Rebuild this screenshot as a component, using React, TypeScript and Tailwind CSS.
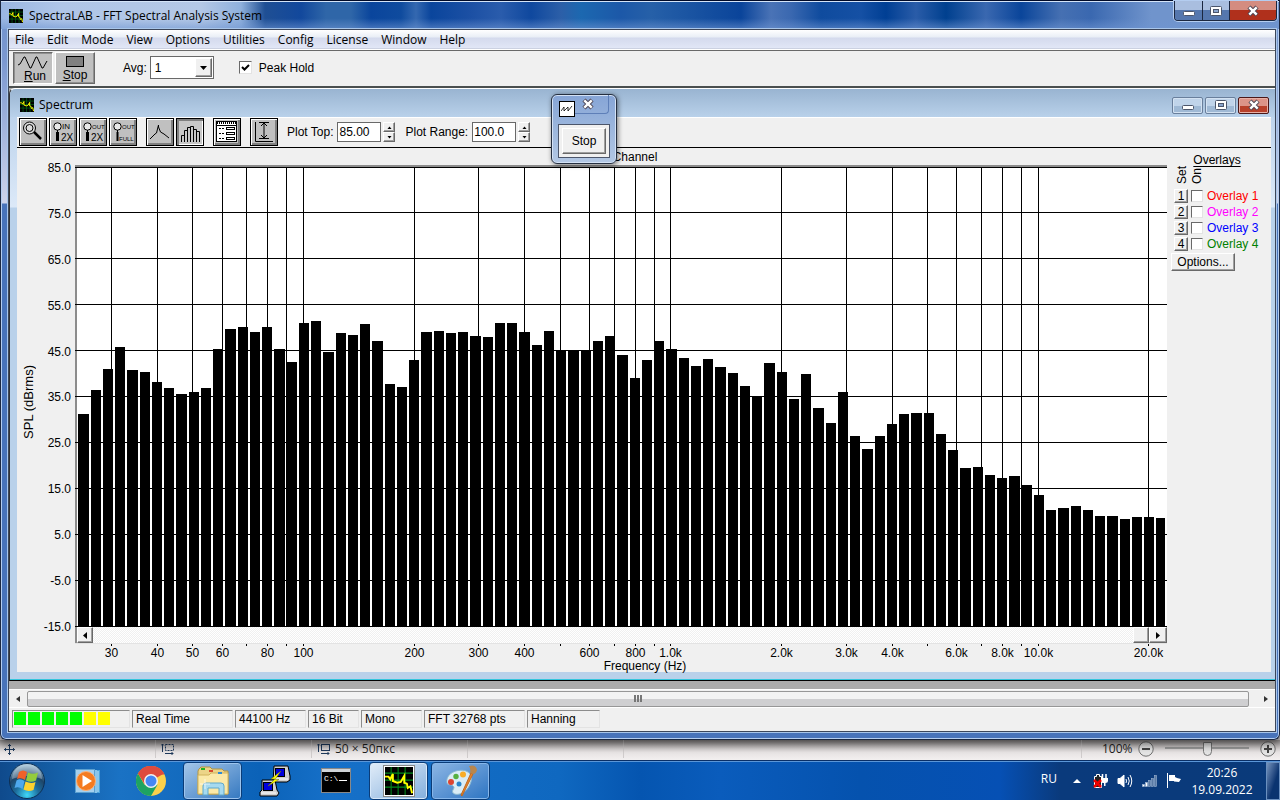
import React from 'react';

const barTops = [
  414, 390, 369, 347, 370, 372, 382, 388, 394, 392, 388, 349, 329, 327, 332, 327, 349, 362, 323, 321,
  352, 333, 335, 324, 341, 384, 387, 360, 332, 331, 333, 332, 336, 337, 323, 323, 332, 345, 331, 350,
  350, 350, 341, 336, 355, 378, 360, 341, 349, 358, 366, 359, 367, 373, 386, 396, 363, 372, 399, 374,
  408, 423, 392, 436, 449, 436, 424, 414, 413, 413, 434, 450, 468, 467, 475, 478, 476, 485, 495, 510,
  508, 506, 510, 516, 516, 519, 517, 517, 518,
].map((y) => y - 167);

const PLOT_W = 1092;
const PLOT_H = 460;

const levels = ['85.0', '75.0', '65.0', '55.0', '45.0', '35.0', '25.0', '15.0', '5.0', '-5.0', '-15.0'];

const freqs: { x: number; label?: string }[] = [
  { x: 36, label: '30' },
  { x: 82, label: '40' },
  { x: 117, label: '50' },
  { x: 147, label: '60' },
  { x: 171 },
  { x: 192, label: '80' },
  { x: 211 },
  { x: 228, label: '100' },
  { x: 339, label: '200' },
  { x: 403, label: '300' },
  { x: 449, label: '400' },
  { x: 485 },
  { x: 514, label: '600' },
  { x: 539 },
  { x: 560, label: '800' },
  { x: 579 },
  { x: 595, label: '1.0k' },
  { x: 706, label: '2.0k' },
  { x: 771, label: '3.0k' },
  { x: 817, label: '4.0k' },
  { x: 852 },
  { x: 881, label: '6.0k' },
  { x: 906 },
  { x: 927, label: '8.0k' },
  { x: 946 },
  { x: 963, label: '10.0k' },
  { x: 1073, label: '20.0k' },
];

const menus = ['File', 'Edit', 'Mode', 'View', 'Options', 'Utilities', 'Config', 'License', 'Window', 'Help'];

const overlays = [
  { id: 1, color: 'text-[#ff0000]' },
  { id: 2, color: 'text-[#ff00ff]' },
  { id: 3, color: 'text-[#0000ff]' },
  { id: 4, color: 'text-[#008000]' },
];

const cells = [
  { text: 'Real Time', width: 'w-[101px]' },
  { text: '44100 Hz', width: 'w-[71px]' },
  { text: '16 Bit', width: 'w-[51px]' },
  { text: 'Mono', width: 'w-[61px]' },
  { text: 'FFT 32768 pts', width: 'w-[101px]' },
  { text: 'Hanning', width: 'w-[73px]' },
];

const raised = 'bg-[#f0f0f0] border border-t-white border-l-white border-r-[#696969] border-b-[#696969] shadow-[inset_-1px_-1px_0_#a0a0a0]';

const AppIcon: React.FC<{ className?: string }> = ({ className }) => (
  <svg viewBox="0 0 16 16" className={className}>
    <rect width="16" height="16" fill="#000" />
    <path d="M3.500 0V16M7.500 0V16M11.500 0V16M0 3.500H16M0 7.500H16M0 11.500H16" stroke="#008a1c" strokeWidth="0.600" />
    <path d="M0 5.500H2L3 7L4.500 4V8L7 9L9 8.500L11 5V9L12.500 9.500L13 12L14.500 11L15.500 15" fill="none" stroke="#ffff00" strokeWidth="1.100" />
  </svg>
);

const WindowGlyph: React.FC<{ kind: 'min' | 'max' | 'close' }> = ({ kind }) => (
  <svg width="14" height="12" viewBox="0 0 14 12">
    {kind === 'min' && <rect x="1.500" y="6.500" width="11" height="4" rx="1" fill="#fff" stroke="#4c566b" />}
    {kind === 'max' && (
      <>
        <rect x="1.500" y="1.500" width="11" height="9" rx="1" fill="#fff" stroke="#4c566b" />
        <rect x="4.500" y="4.500" width="5" height="3" fill="#8aa5ce" stroke="#4c566b" />
      </>
    )}
    {kind === 'close' && (
      <>
        <path d="M3 2L11 10M11 2L3 10" stroke="#4c4452" strokeWidth="4.400" />
        <path d="M3.300 2.300L10.700 9.700M10.700 2.300L3.300 9.700" stroke="#fff" strokeWidth="2.400" />
      </>
    )}
  </svg>
);

const ToolButton: React.FC<{ label: string; pressed?: boolean; className?: string; children: React.ReactNode }> = ({
  label,
  pressed,
  className = '',
  children,
}) => (
  <button
    aria-label={label}
    className={`w-7 h-7 border border-black ${
      pressed
        ? 'bg-[#c8c8c8] shadow-[inset_2px_2px_0_#808080,inset_-1px_-1px_0_#fff]'
        : 'bg-[#c0c0c0] shadow-[inset_1px_1px_0_#fff,inset_-2px_-2px_0_#808080]'
    } ${className}`}
  >
    <svg width="26" height="26" viewBox="0 0 26 26" fill="none" stroke="#000">
      {children}
    </svg>
  </button>
);

const ZoomMark: React.FC<{ top: string; bottom: string; small?: boolean }> = ({ top, bottom, small }) => (
  <>
    <circle cx="7.500" cy="7.500" r="3.700" fill="#e8e8e8" />
    <path d="M7.500 11V13" />
    <path d="M7.500 13V22" strokeWidth={small ? 2 : 3} />
    <text x="12" y="10" fontSize={top === 'IN' ? 8 : 6} stroke="none" fill="#000">{top}</text>
    <text x={small ? 9 : 11} y="22" fontSize={small ? 6 : 10} stroke="none" fill="#000">{bottom}</text>
  </>
);

const NumberField: React.FC<{ id: string; label: string; value: string }> = ({ id, label, value }) => (
  <div className="flex items-center">
    <label htmlFor={id} className="mr-1 whitespace-nowrap">{label}</label>
    <input id={id} defaultValue={value} className="w-11 h-5 bg-white border border-[#696969] px-px mr-0.5 outline-none" />
    <div className="flex flex-col">
      {['up', 'down'].map((dir) => (
        <button key={dir} aria-label={`${label} ${dir}`} className={`w-3 h-[10px] flex items-center justify-center ${raised}`}>
          <svg width="5" height="3" viewBox="0 0 5 3">
            <path d={dir === 'up' ? 'M0.500 3H4.500L2.500 0.500Z' : 'M0.500 0H4.500L2.500 2.500Z'} />
          </svg>
        </button>
      ))}
    </div>
  </div>
);

const Spectrum: React.FC = () => {
  const barX = (i: number) => Math.round(3.4 + 12.25 * i);

  return (
    <svg viewBox={`0 0 ${PLOT_W} ${PLOT_H}`} preserveAspectRatio="none" className="block w-full flex-1 min-h-0 bg-white">
      <rect width="2" height={PLOT_H} fill="#8c8c8c" />
      {levels.map((level, i) => (
        <rect key={level} y={i === 0 ? 0 : i * 46 - 1} width={PLOT_W} height="1" />
      ))}
      {freqs.map((f) => (
        <rect key={f.x} x={f.x} width="1" height={PLOT_H} />
      ))}
      {barTops.map((top, i) => (
        <rect
          key={i}
          x={barX(i)}
          y={top}
          width={i === barTops.length - 1 ? 9 : barX(i + 1) - barX(i) - 2}
          height={PLOT_H - top}
        />
      ))}
    </svg>
  );
};

const PlotArea: React.FC = () => (
  <div className="flex flex-1 min-h-0">
    <div className="w-[58px] flex shrink-0">
      <div className="w-6 flex items-center justify-center pb-4">
        <span className="[writing-mode:vertical-rl] rotate-180 whitespace-nowrap text-[13px] leading-4">SPL (dBrms)</span>
      </div>
      <div className="flex-1 flex flex-col justify-between items-end pt-3 pb-[37px] pr-1 leading-4">
        {levels.map((level) => (
          <span key={level}>{level}</span>
        ))}
      </div>
    </div>

    <div className="flex-1 min-w-0 flex flex-col">
      <div className="h-[17px] leading-[18px] text-center pl-7">Channel</div>
      <div className="h-0.5 bg-[#8c8c8c]" />
      <Spectrum />
      <div className="h-4 flex border-l-2 border-[#8c8c8c] bg-[#f8f8f8]">
        <button aria-label="Scroll plot left" className={`w-4 flex items-center justify-center ${raised}`}>
          <svg width="4" height="7" viewBox="0 0 4 7"><path d="M4 0V7L0 3.500Z" /></svg>
        </button>
        <div className="flex-1 bg-[repeating-conic-gradient(#f0f0f0_0_25%,#ffffff_0_50%)] bg-[length:2px_2px]" />
        <div className={`w-4 ${raised}`} />
        <button aria-label="Scroll plot right" className={`w-[18px] flex items-center justify-center ${raised}`}>
          <svg width="4" height="7" viewBox="0 0 4 7"><path d="M0 0V7L4 3.500Z" /></svg>
        </button>
      </div>
      <div className="h-[29px] relative border-t border-[#e3e3e3]">
        {freqs.map((f) => (
          <div
            key={f.x}
            className="absolute top-0 w-px flex flex-col items-center"
            style={{ left: `${(f.x / PLOT_W) * 100}%` }}
          >
            <i className="w-px h-0.5 bg-black" />
            {f.label && <span className="mt-px leading-3">{f.label}</span>}
          </div>
        ))}
        <div className="absolute inset-x-0 bottom-0 pl-12 text-center leading-3">Frequency (Hz)</div>
      </div>
    </div>

    <div className="w-[104px] shrink-0 pl-1 pt-1">
      <div className="pr-2 text-center underline underline-offset-2 leading-4">Overlays</div>
      <div className="flex pl-1 gap-px h-4 mb-1 items-end leading-[14px]">
        <span className="w-[14px] [writing-mode:vertical-rl] rotate-180">Set</span>
        <span className="w-[14px] [writing-mode:vertical-rl] rotate-180">On</span>
      </div>
      {overlays.map((o) => (
        <div key={o.id} className="flex items-center h-4 pl-[3px]">
          <button className={`w-[14px] h-[14px] leading-3 text-center ${raised}`}>{o.id}</button>
          <input
            id={`overlay-${o.id}`}
            type="checkbox"
            className="appearance-none w-3 h-3 ml-[3px] mr-1 bg-white border border-[#e3e3e3] border-t-[#696969] border-l-[#696969]"
          />
          <label htmlFor={`overlay-${o.id}`} className={`whitespace-nowrap ${o.color}`}>Overlay {o.id}</label>
        </div>
      ))}
      <button className={`w-16 h-[18px] leading-4 mt-px ${raised}`}>Options...</button>
    </div>
  </div>
);

const SpectrumWindow: React.FC = () => (
  <div className="flex-1 min-h-0 flex flex-col border-l border-[#333] border-t border-t-white border-b border-b-black rounded-tl-md bg-[#b9d1ea]">
    <div className="h-7 shrink-0 flex items-center pt-1 pl-[10px] pr-[6px] bg-linear-to-b from-[#99b4d1] to-[#b9d1ea] rounded-tl-md">
      <AppIcon className="w-[14px] h-[14px]" />
      <span className="flex-1 pl-[5px] font-['Open_Sans',sans-serif]">Spectrum</span>
      <div className="flex gap-0.5">
        <button aria-label="Minimize spectrum" className="w-[31px] h-[17px] flex items-center justify-center rounded-xs border border-[#697f9c] bg-linear-to-b from-[#c0d4ea] from-50% to-[#9fb9d5] to-50% shadow-[inset_0_0_0_1px_#d3e2f2]"><WindowGlyph kind="min" /></button>
        <button aria-label="Maximize spectrum" className="w-[31px] h-[17px] flex items-center justify-center rounded-xs border border-[#697f9c] bg-linear-to-b from-[#c0d4ea] from-50% to-[#9fb9d5] to-50% shadow-[inset_0_0_0_1px_#d3e2f2]"><WindowGlyph kind="max" /></button>
        <button aria-label="Close spectrum" className="w-[31px] h-[17px] flex items-center justify-center rounded-xs border border-[#4b1717] bg-linear-to-b from-[#dc9488] from-50% to-[#b8402a] to-50% shadow-[inset_0_0_0_1px_#e8b0a6]"><WindowGlyph kind="close" /></button>
      </div>
    </div>

    <div className="flex-1 min-h-0 flex pl-[7px] pr-1 pb-[7px] border-b border-[#35c5dc] bg-[linear-gradient(to_bottom,#bdd3ec_0,#dce9f8_90px,#b9d1ea_91px)]">
      <div className="flex-1 min-w-0 flex flex-col bg-[#f0f0f0]">
        <div className="h-[31px] shrink-0 flex items-center pl-0.5 pb-px border-t border-white border-b border-b-black">
          <div className="flex gap-0.5">
            <ToolButton label="Zoom">
              <circle cx="9.500" cy="9" r="6" fill="#ddd" />
              <circle cx="9.500" cy="9" r="3.500" />
              <path d="M14 13L21 20" strokeWidth="2.500" />
            </ToolButton>
            <ToolButton label="Zoom in 2X"><ZoomMark top="IN" bottom="2X" /></ToolButton>
            <ToolButton label="Zoom out 2X"><ZoomMark top="OUT" bottom="2X" /></ToolButton>
            <ToolButton label="Zoom out full"><ZoomMark top="OUT" bottom="FULL" small /></ToolButton>
            <ToolButton label="Line plot" className="ml-[7px]">
              <path d="M3 20L8 15L9.500 14L11.500 6V8L13.500 13L17 15L22 19" />
            </ToolButton>
            <ToolButton label="Bar plot" pressed>
              <path d="M4.500 23V16.500H7.500V11.500H10.500V8.500H13.500V7.500H16.500V10.500H19.500V12.500H22.500V23M7.500 23V12M10.500 23V9M13.500 23V8M16.500 23V8M19.500 23V11" />
            </ToolButton>
            <ToolButton label="Display options" className="ml-[7px]">
              <rect x="2.500" y="2.500" width="20" height="20" fill="#fff" />
              <path d="M3 4H22" strokeWidth="2" strokeDasharray="1 1" />
              <path d="M3 6.500H22" />
              <path d="M5 9.500H10M5 14.500H10M5 19.500H10" strokeDasharray="2 1" />
              <rect x="12.500" y="8.500" width="8" height="2" />
              <rect x="12.500" y="13.500" width="8" height="2" />
              <rect x="12.500" y="18.500" width="8" height="2" />
            </ToolButton>
            <ToolButton label="Autoscale" className="ml-[7px]">
              <path d="M4.500 3V22.500H22M8 3.500H18M8 19.500H18M13 4V19M10 7L13 4L16 7M10 16L13 19L16 16" />
            </ToolButton>
          </div>
          <div className="flex gap-[10px] pl-[9px]">
            <NumberField id="plot-top" label="Plot Top:" value="85.00" />
            <NumberField id="plot-range" label="Plot Range:" value="100.0" />
          </div>
        </div>
        <PlotArea />
      </div>
    </div>
  </div>
);

const StopPopup: React.FC = () => (
  <div className="absolute left-[550px] top-[93px] w-[66px] h-[70px] rounded-md border border-[#252f40] bg-linear-to-b from-[#86a5d6] to-[#b3c8e4] shadow-[inset_0_0_0_1px_#d4e2f5,1px_1px_5px_#0008]">
    <div className="flex items-start pl-[7px]">
      <span className="mt-[6px] w-4 h-4 bg-white border border-black flex items-center justify-center">
        <svg width="12" height="8" viewBox="0 0 12 8" fill="none" stroke="#000" strokeWidth="0.800"><path d="M0 6L3 2V6L7 2V6L11 1" /></svg>
      </span>
      <button aria-label="Close" className="w-[34px] h-[19px] pl-1.5 flex items-center justify-start rounded-br-sm border-r border-b border-[#5e7fb8]">
        <WindowGlyph kind="close" />
      </button>
    </div>
    <div className="mx-[6px] mt-[7px] h-[34px] p-[3px] bg-[#f0f0f0] border border-[#4c566b]">
      <button className={`w-full h-full ${raised}`}>Stop</button>
    </div>
  </div>
);

const Toolbar: React.FC = () => (
  <div className="h-9 shrink-0 flex items-center pl-1 pb-0.5 bg-[#f0f0f0] border-t border-[#696969]">
    <button className="w-10 h-8 flex flex-col items-center justify-end bg-[#c0c0c0] border border-t-[#696969] border-l-[#696969] border-white shadow-[inset_1px_1px_0_#909090] leading-[13px]">
      <svg width="30" height="15" viewBox="0 0 30 15" fill="none" stroke="#000"><path d="M0 10L2 9L6 2H7L12 13H13L18 2H19L24 13H25L29 6" /></svg>
      <span className="pl-1"><u>R</u>un</span>
    </button>
    <button className="w-10 h-8 ml-0.5 pb-px flex flex-col items-center justify-end bg-[#c0c0c0] border border-t-white border-l-white border-[#696969] shadow-[inset_-1px_-1px_0_#909090] leading-[13px]">
      <span className="w-[18px] h-[11px] mb-[2px] bg-[#808080] border border-black" />
      <span><u>S</u>top</span>
    </button>
    <label htmlFor="avg" className="ml-7 mr-[3px]">Avg:</label>
    <div className="relative w-16 h-[23px]">
      <select id="avg" className="appearance-none w-full h-full pl-1 bg-white border border-[#696969] outline-none">
        <option>1</option>
      </select>
      <span className={`absolute right-0.5 top-0.5 w-[17px] h-[19px] flex items-center justify-center pointer-events-none ${raised}`}>
        <svg width="7" height="4" viewBox="0 0 7 4"><path d="M0 0H7L3.500 4Z" /></svg>
      </span>
    </div>
    <div className="relative w-[13px] h-[13px] ml-[25px]">
      <input id="peak" type="checkbox" defaultChecked className="peer appearance-none block w-[13px] h-[13px] bg-white border border-[#e3e3e3] border-t-[#696969] border-l-[#696969]" />
      <svg viewBox="0 0 13 13" className="absolute inset-0 hidden peer-checked:block pointer-events-none" fill="none" stroke="#000" strokeWidth="2"><path d="M3 6L5.500 8.500L10 4" /></svg>
    </div>
    <label htmlFor="peak" className="ml-[7px]">Peak Hold</label>
  </div>
);

const StatusBar: React.FC = () => (
  <div className="h-6 shrink-0 flex items-center gap-0.5 pl-[3px] pb-0.5 bg-[#f0f0f0] border-t border-white">
    <div className="w-[118px] h-[18px] flex items-center gap-0.5 pl-px border border-[#e3e3e3] border-t-[#8c8c8c] border-l-[#8c8c8c]">
      {[0, 1, 2, 3, 4].map((n) => (
        <i key={n} className="w-3 h-[13px] bg-[#00ff00]" />
      ))}
      {[5, 6].map((n) => (
        <i key={n} className="w-3 h-[13px] bg-[#ffff00]" />
      ))}
    </div>
    {cells.map((cell) => (
      <div key={cell.text} className={`h-[18px] leading-4 pl-[3px] whitespace-nowrap border border-[#e3e3e3] border-t-[#8c8c8c] border-l-[#8c8c8c] ${cell.width}`}>
        {cell.text}
      </div>
    ))}
  </div>
);

const MainWindow: React.FC = () => (
  <div className="relative z-10 flex-1 min-h-0 flex flex-col rounded-b-md border border-t-[#000a28] border-[#1b2740] pl-2 pr-1 pb-2 bg-[linear-gradient(to_bottom,#6f92cc_0,#7b98d0_60px,#cdd3ea_202px,#4873ba_203px)] shadow-[0_2px_8px_2px_#0009,inset_0_0_0_1px_#b4cdf0]">
    <div className="h-7 shrink-0 flex -ml-2 -mr-1 pl-2 items-center border-t border-[#d4e4f8] bg-[linear-gradient(to_bottom,transparent_60%,#6f95d299_100%),linear-gradient(to_right,#9ab6e2_0,#b0c6e8_60px,#b4c8e6_200px,#8fb0dc_240px,#1f4f94_264px,#12489c_300px,#2f66a8_325px,#2f66a8_350px,#0a459c_370px,#0f4b9e_400px,#3468b0_415px,#0a459c_430px,#1c50a4_470px,#2a5cac_500px,#0f489e_530px,#2c5fa8_560px,#1c68b0_580px,#1c58a8_620px,#2660a8_650px,#0a449a_740px,#4a73b6_770px,#3a68b0_790px,#0f4b9e_820px,#1550a4_860px,#003f94_885px,#2a5ca8_915px,#00408f_945px,#3a68b0_985px,#0a459a_1020px,#4670b2_1060px,#3a68b0_1090px,#7094cc_1150px,#7094cc_100%)]">
      <AppIcon className="w-[14px] h-[14px]" />
      <span className="flex-1 pl-[6px] font-['Open_Sans',sans-serif]">SpectraLAB - FFT Spectral Analysis System</span>
      <div className="self-start flex mr-0.5 -mt-px rounded-b-sm overflow-hidden border border-t-0 border-[#1b2740] shadow-[0_0_0_1px_#b4cdf0]">
        <button aria-label="Minimize" className="w-7 h-[19px] flex items-center justify-center border-r border-[#1b2740] bg-linear-to-b from-[#a9bedf] from-50% to-[#5577ae] to-50%"><WindowGlyph kind="min" /></button>
        <button aria-label="Maximize" className="w-[27px] h-[19px] flex items-center justify-center border-r border-[#1b2740] bg-linear-to-b from-[#a9bedf] from-50% to-[#5577ae] to-50%"><WindowGlyph kind="max" /></button>
        <button aria-label="Close" className="w-[46px] h-[19px] flex items-center justify-center bg-linear-to-b from-[#d48c80] from-50% to-[#b0301c] to-50%"><WindowGlyph kind="close" /></button>
      </div>
    </div>

    <div className="flex-1 min-h-0 mt-px flex flex-col bg-[#ababab] shadow-[0_0_0_1px_#3c465a,0_0_0_2px_#a9c6ea]">
      <nav className="h-5 shrink-0 flex items-center pl-[6px] gap-[13px] border-b border-white bg-[linear-gradient(to_bottom,#ffffff_0,#e9eef6_7px,#d4daed_8px,#e1e6f6_18px,#b6bccc_19px)] font-['Open_Sans',sans-serif]">
        {menus.map((m) => (
          <button key={m}>{m}</button>
        ))}
      </nav>
      <Toolbar />
      <div className="h-0.5 shrink-0 bg-[#4a4f4f]" />
      <SpectrumWindow />
      <div className="h-2 shrink-0" />
      <div className="h-[18px] shrink-0 flex items-center bg-[#f0f0f0] border-t border-white">
        <button aria-label="Scroll left" className="w-[18px] h-full flex items-center justify-center">
          <svg width="4" height="6" viewBox="0 0 4 6"><path d="M4 0V6L0 3Z" fill="#333" /></svg>
        </button>
        <div className="flex-1 h-4 flex items-center justify-center gap-px rounded-xs border border-[#979797] bg-linear-to-b from-[#f3f3f3] from-50% to-[#cfcfd1] to-50%">
          <i className="w-0.5 h-[7px] bg-[#777]" />
          <i className="w-0.5 h-[7px] bg-[#777]" />
          <i className="w-0.5 h-[7px] bg-[#777]" />
        </div>
        <button aria-label="Scroll right" className="w-[26px] h-full flex items-center justify-center pl-2">
          <svg width="4" height="6" viewBox="0 0 4 6"><path d="M0 0V6L4 3Z" fill="#333" /></svg>
        </button>
      </div>
      <StatusBar />
    </div>
    <StopPopup />
  </div>
);

const PaintStatus: React.FC = () => (
  <div className="h-5 shrink-0 flex items-center pb-0.5 bg-linear-to-b from-[#a8a4a4] via-[#e6e2e2] via-60% to-[#f3f0f0] text-[#1e1e1e] font-['Open_Sans',sans-serif]">
    <div className="w-[156px] h-full pl-1 flex items-center border-r border-[#cfcbcb]">
      <svg width="11" height="11" viewBox="0 0 11 11" fill="none" stroke="#1e395b"><path d="M5.500 0V11M0 5.500H11M4 2L5.500 0.500L7 2M4 9L5.500 10.500L7 9M2 4L0.500 5.500L2 7M9 4L10.500 5.500L9 7" /></svg>
    </div>
    <div className="w-[156px] h-full pl-[5px] flex items-center border-r border-[#cfcbcb]">
      <svg width="13" height="12" viewBox="0 0 13 12" fill="none" stroke="#1e395b"><path d="M1.500 9V1M0 2.500L1.500 1L3 2.500M4 10.500H12M10.500 9L12 10.500L10.500 12" /><rect x="4.500" y="1.500" width="8" height="6" strokeDasharray="2 1" /></svg>
    </div>
    <div className="w-[156px] h-full pl-[5px] flex items-center border-r border-[#cfcbcb]">
      <svg width="13" height="12" viewBox="0 0 13 12" fill="none" stroke="#1e395b"><path d="M1.500 9V1M0 2.500L1.500 1L3 2.500M4 10.500H12M10.500 9L12 10.500L10.500 12" /><rect x="4.500" y="1.500" width="8" height="6" /></svg>
      <span className="pl-[5px]">50 × 50пкс</span>
    </div>
    <div className="w-[156px] h-full border-r border-[#cfcbcb]" />
    <div className="flex-1 h-full border-r border-[#cfcbcb]" />
    <div className="flex items-center pl-5 pr-1">
      <label htmlFor="zoom" className="w-9">100%</label>
      <button aria-label="Zoom out">
        <svg width="16" height="16" viewBox="0 0 16 16" fill="#e4e4e4" stroke="#707070"><circle cx="8" cy="8" r="7.200" /><path d="M4 8H12" stroke="#444" strokeWidth="2" /></svg>
      </button>
      <input
        id="zoom"
        type="range"
        className="appearance-none w-[84px] h-4 mx-[11px] bg-[linear-gradient(#999,#999)] bg-[length:100%_2px] bg-no-repeat bg-[position:0_6px] [&::-webkit-slider-thumb]:appearance-none [&::-webkit-slider-thumb]:w-[9px] [&::-webkit-slider-thumb]:h-[14px] [&::-webkit-slider-thumb]:bg-[#e4e4e4] [&::-webkit-slider-thumb]:border [&::-webkit-slider-thumb]:border-[#777] [&::-webkit-slider-thumb]:rounded-b-md"
      />
      <button aria-label="Zoom in">
        <svg width="16" height="16" viewBox="0 0 16 16" fill="#e4e4e4" stroke="#707070"><circle cx="8" cy="8" r="7.200" /><path d="M4 8H12M8 4V12" stroke="#444" strokeWidth="2" /></svg>
      </button>
    </div>
  </div>
);

const StartOrb: React.FC = () => (
  <svg width="38" height="38" viewBox="0 0 38 38">
    <defs>
      <radialGradient id="orb" cx="0.500" cy="0.900" r="0.850">
        <stop offset="0" stopColor="#3fd8f8" />
        <stop offset="0.400" stopColor="#1c6c9c" />
        <stop offset="0.700" stopColor="#1e4568" />
        <stop offset="1" stopColor="#8fb4cc" />
      </radialGradient>
    </defs>
    <circle cx="19" cy="19" r="17.500" fill="url(#orb)" stroke="#0d2f55" />
    <path d="M4 17A15 15 0 0 1 34 17Q19 11 4 17Z" fill="#fff" opacity="0.300" />
    <path d="M11 10Q15 7 19 10L17 18Q13 15 9 17Z" fill="#f0612a" />
    <path d="M20 10.500Q25 13 30 10.500L28 18.500Q23 21 18 18.500Z" fill="#94cc3c" />
    <path d="M8.500 18.500Q12 16 16.500 19L14.500 27Q10.500 24 6.500 26Z" fill="#4ea8ec" />
    <path d="M17.500 19.500Q23 22 27.500 20L25.500 28Q20 30 15.500 27.500Z" fill="#fdd22e" />
  </svg>
);

const MediaIcon: React.FC = () => (
  <svg width="26" height="26" viewBox="0 0 26 26">
    <path d="M6 2H25V25H6Z" fill="#4ca4dc" />
    <path d="M23 3V24M21 2V25" stroke="#c8e8fa" />
    <rect x="0.500" y="1.500" width="19" height="23" fill="#a4d0ee" stroke="#5ba0d0" />
    <circle cx="11" cy="13" r="9.500" fill="#f47b20" stroke="#fbb27a" />
    <path d="M7.500 7V19L17 13Z" fill="#fff" />
  </svg>
);

const ChromeIcon: React.FC = () => (
  <svg width="30" height="30" viewBox="0 0 30 30">
    <circle cx="15" cy="15" r="15" fill="#fbd04b" />
    <path d="M15 15L2 7.500A15 15 0 0 1 28 7.500Z" fill="#de4b3e" />
    <path d="M2 7.500A15 15 0 0 0 15 30L21.500 18.700L15 15L8.500 18.700Z" fill="#1da362" />
    <path d="M15 8.500H28.500A15 15 0 0 0 2 7.500L8.500 18Z" fill="#de4b3e" />
    <circle cx="15" cy="15" r="7" fill="#f1f1f1" />
    <circle cx="15" cy="15" r="5.500" fill="#4587f3" />
  </svg>
);

const ExplorerIcon: React.FC = () => (
  <svg width="34" height="30" viewBox="0 0 34 30">
    <path d="M3 3L5 1H14L16 3H26L28 5H32V28H2V5Z" fill="#ecd488" stroke="#b29440" />
    <path d="M2 9H13L15 7H32V28H2Z" fill="#fbe9a8" stroke="#d2b45c" />
    <rect x="5" y="2" width="4" height="2" fill="#22b022" />
    <rect x="13" y="4" width="4" height="2" fill="#d84a2c" />
    <rect x="22" y="6" width="4" height="2" fill="#2a8ad8" />
    <path d="M7 29V20Q7 17 10 17H25Q28 17 28 20V29H23V22H12V29Z" fill="#a6daf0" stroke="#5ea8cc" />
    <path d="M9 13V23M4 18H14" stroke="#fff" opacity="0.700" />
  </svg>
);

const PuttyIcon: React.FC = () => (
  <svg width="32" height="32" viewBox="0 0 32 32" stroke="#000">
    <path d="M15 1H29L31 11V15L28 17H14Z" fill="#d0d0d0" />
    <rect x="16.500" y="3.500" width="9" height="8" fill="#0000dc" />
    <path d="M16 14H29" stroke="#fff" />
    <path d="M3 15H16L18 25L20 28L18 31H1V27L3 25Z" fill="#d0d0d0" />
    <rect x="4.500" y="17.500" width="9" height="8" fill="#0000dc" />
    <path d="M2 28H17" stroke="#fff" />
    <path d="M22 6L12 14H16L9 21L20 14.500H16Z" fill="#ffff00" stroke="#777700" strokeWidth="0.500" />
  </svg>
);

const CmdIcon: React.FC = () => (
  <svg width="30" height="25" viewBox="0 0 30 25">
    <rect x="0.500" y="0.500" width="29" height="24" fill="#000" stroke="#888" />
    <rect x="1" y="1" width="28" height="3" fill="#d0d4d8" />
    <text x="3" y="13" fontSize="8" fill="#fff" fontFamily="Liberation Mono">C:\</text>
    <path d="M18 12.500H26" stroke="#fff" />
  </svg>
);

const PaintIcon: React.FC = () => (
  <svg width="34" height="32" viewBox="0 0 34 32">
    <path d="M3 18C1 9 13 3 22 6C30 9 28 17 24 23C20 29 12 31 9 28C7 25 12 23 9 21C7 19 4 21 3 18Z" fill="#d9ecf6" stroke="#8ab8d0" />
    <circle cx="7" cy="17" r="3" fill="#dc4432" />
    <circle cx="12" cy="11.500" r="2.700" fill="#56b040" />
    <circle cx="19" cy="9.500" r="3" fill="#f8ac28" />
    <circle cx="15" cy="19" r="2.500" fill="#2884cc" />
    <path d="M27 8L29 9L18 31L17 30Z" fill="#e88428" stroke="#c06820" />
    <path d="M25 1Q32 -1 33 5Q32 9 29 9L26 8Q27 4 25 1Z" fill="#b8864e" />
  </svg>
);

const Taskbar: React.FC = () => (
  <div className="h-10 shrink-0 flex items-center border-t border-[#0a2f66] shadow-[inset_0_1px_0_#5a96d8] bg-[linear-gradient(to_right,#0f4a8c_0,#1560a8_60px,#1a72c4_120px,#0b62b8_260px,#1670c8_330px,#0f68c0_560px,#0555b0_640px,#0a5cbc_720px,#0552ae_860px,#0650b4_1000px,#0a3a7c_1060px,#0a3a7a_100%)] text-white font-['Open_Sans',sans-serif]">
    <button aria-label="Start" className="ml-2 w-[38px]"><StartOrb /></button>
    <button aria-label="Media Player" className="ml-[29px]"><MediaIcon /></button>
    <button aria-label="Chrome" className="ml-[35px]"><ChromeIcon /></button>
    <button aria-label="Explorer" className="ml-[17px] w-[59px] h-[38px] flex items-center justify-center rounded-sm border border-[#0a3c78] bg-linear-to-br from-[#a4c6e8] to-[#3278c0] shadow-[inset_0_0_0_1px_#9cc4ee]"><ExplorerIcon /></button>
    <button aria-label="PuTTY" className="ml-[17px]"><PuttyIcon /></button>
    <button aria-label="Command Prompt" className="ml-[30px]"><CmdIcon /></button>
    <button aria-label="SpectraLAB" className="ml-[18px] w-[59px] h-[38px] flex items-center justify-center rounded-sm border border-[#0a3c78] bg-linear-to-br from-[#e2edf8] to-[#82aedc] shadow-[inset_0_0_0_1px_#d6e8fa]">
      <AppIcon className="w-8 h-8 p-px bg-white border border-[#888]" />
    </button>
    <button aria-label="Paint" className="ml-[3px] w-[59px] h-[38px] flex items-center justify-center rounded-sm border border-[#0a3c78] bg-linear-to-br from-[#8cb6e4] to-[#2a74c2] shadow-[inset_0_0_0_1px_#86b6ea]"><PaintIcon /></button>

    <div className="flex-1" />
    <button className="pb-1">RU</button>
    <button aria-label="Show hidden icons" className="ml-4">
      <svg width="8" height="4" viewBox="0 0 8 4"><path d="M4 0L8 4H0Z" fill="#fff" /></svg>
    </button>
    <svg width="16" height="16" viewBox="0 0 16 16" className="ml-3 shrink-0">
      <path d="M1.500 3.500H3.500V1.500H6.500V3.500H8.500V14.500H1.500Z" fill="#222" stroke="#fff" />
      <path d="M8 5H15V8Q15 10 12.500 10V13H11V10Q8 10 8 8Z" fill="#fff" />
      <path d="M9.500 1V5M13 1V5" stroke="#fff" strokeWidth="1.500" />
      <path d="M1 7L8 14M8 7L1 14" stroke="#f00000" strokeWidth="2.500" />
    </svg>
    <svg width="16" height="14" viewBox="0 0 16 14" className="ml-2 shrink-0" fill="none" stroke="#fff">
      <path d="M1 4.500H3L7 1V13L3 9.500H1Z" fill="#fff" />
      <path d="M9 5Q10 7 9 9M11 3Q13.500 7 11 11M13 1Q16.500 7 13 13" />
    </svg>
    <svg width="16" height="12" viewBox="0 0 16 12" className="ml-[9px] shrink-0" stroke="#9fb6d4" strokeWidth="0.600">
      <rect x="0.500" y="9.500" width="2" height="2" fill="#fff" />
      <rect x="3.500" y="7.500" width="2" height="4" fill="#fff" />
      <rect x="6.500" y="5.500" width="2" height="6" fill="#5a7aa4" />
      <rect x="9.500" y="3.500" width="2" height="8" fill="#5a7aa4" />
      <rect x="12.500" y="0.500" width="2" height="11" fill="#5a7aa4" />
    </svg>
    <svg width="16" height="15" viewBox="0 0 16 15" className="ml-2 shrink-0" fill="#fff">
      <path d="M1 0H2V15H1ZM3 2H9V4L11 5L15 6L13 9L8 8.500V8H3Z" />
    </svg>
    <div className="w-[84px] pr-1 flex flex-col items-center leading-[17px]">
      <span>20:26</span>
      <span>19.09.2022</span>
    </div>
    <button aria-label="Show desktop" className="w-[14px] h-[38px] border border-[#6a90c0] bg-linear-to-br from-[#7794bc] to-[#0a3470] to-60%" />
  </div>
);

const App: React.FC = () => (
  <div className="h-screen flex flex-col overflow-hidden bg-[#e6e2e2] text-black text-xs font-['Liberation_Sans',Arial,sans-serif]">
    <MainWindow />
    <PaintStatus />
    <Taskbar />
  </div>
);

export default App;
